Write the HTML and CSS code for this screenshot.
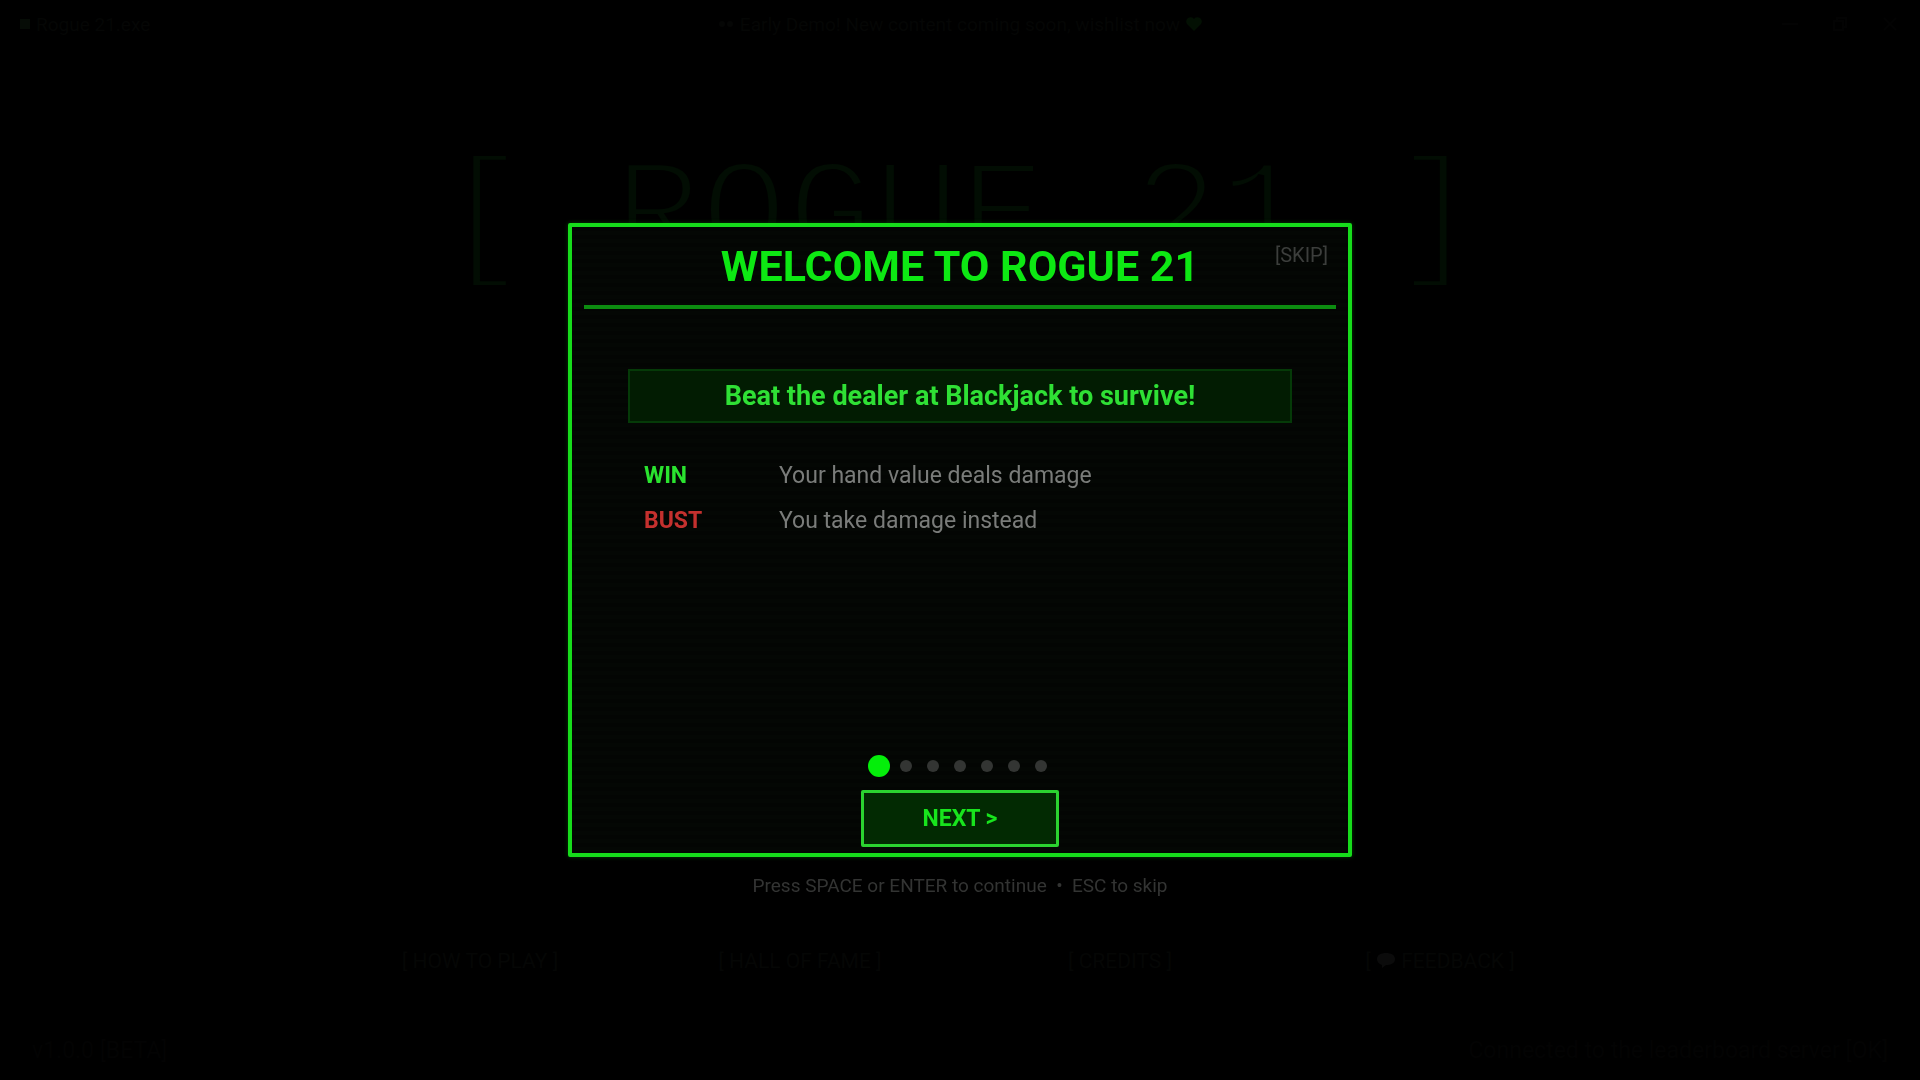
FILE: index.html
```html
<!DOCTYPE html>
<html lang="en">
<head>
<meta charset="utf-8">
<meta name="viewport" content="width=device-width, initial-scale=1">
<title>Rogue 21</title>
<link rel="stylesheet" href="styles.css">
</head>
<body>
<div class="screen">
  <header class="titlebar">
    <div class="app-name"><span class="app-icon"></span>Rogue 21.exe</div>
    <div class="notice">
      <svg width="16" height="12" viewBox="0 0 16 12" fill="currentColor"><circle cx="4" cy="6" r="3"/><circle cx="12" cy="6" r="3"/></svg>
      <span>Early Demo! New content coming soon, wishlist now</span>
      <svg class="heart" width="16" height="14" viewBox="0 0 16 14" fill="currentColor"><path d="M8 14 1 7a4 4 0 0 1 7-5 4 4 0 0 1 7 5Z"/></svg>
    </div>
    <div class="window-controls">
      <svg width="20" height="20" viewBox="0 0 20 20"><path d="M2 10h16"/></svg>
      <svg width="20" height="20" viewBox="0 0 20 20"><path d="M4 7h9v9H4zM7 7V4h9v9h-3"/></svg>
      <svg width="20" height="20" viewBox="0 0 20 20"><path d="m4 4 12 12M16 4 4 16"/></svg>
    </div>
  </header>
  <h1 class="logo">[ ROGUE 21 ]</h1>
  <nav class="menu">
    <a href="#play">[ HOW TO PLAY ]</a>
    <a href="#hall">[ HALL OF FAME ]</a>
    <a href="#credits">[ CREDITS ]</a>
    <a href="#feedback">[ <svg class="bubble" width="20" height="16" viewBox="0 0 20 16" fill="currentColor"><path d="M10 1c5 0 9 2 9 6s-4 6-9 6l-4 3v-3C3 12 1 10 1 7c0-4 4-6 9-6Z"/></svg> FEEDBACK ]</a>
  </nav>
  <footer class="footer">
    <span>v1.0.0 [BETA]</span>
    <span>Connected to the leaderboard server [OK]</span>
  </footer>
</div>

<div class="overlay">
  <section class="modal" role="dialog" aria-modal="true" aria-labelledby="modal-title">
    <header class="modal-header">
      <h2 class="modal-title" id="modal-title">WELCOME TO ROGUE 21</h2>
      <button class="skip" type="button">[SKIP]</button>
    </header>
    <div class="modal-body">
      <p class="callout">Beat the dealer at Blackjack to survive!</p>
      <dl class="rules">
        <dt class="win">WIN</dt>
        <dd>Your hand value deals damage</dd>
        <dt class="bust">BUST</dt>
        <dd>You take damage instead</dd>
      </dl>
    </div>
    <div class="dots">
      <span class="dot active"></span><span class="dot"></span><span class="dot"></span><span class="dot"></span><span class="dot"></span><span class="dot"></span><span class="dot"></span>
    </div>
    <button class="next" type="button">NEXT &gt;</button>
  </section>
  <p class="hint">Press SPACE or ENTER to continue &nbsp;•&nbsp; ESC to skip</p>
</div>
</body>
</html>
```
FILE: styles.css
```css
* {
  box-sizing: border-box;
}

body {
  margin: 0;
  background: #000;
  color: #050605;
  font-family: Roboto, "Liberation Sans", sans-serif;
}

h1, h2, p, dl, dd {
  margin: 0;
}

button {
  padding: 0;
  border: 0;
  background: none;
  font-family: inherit;
  cursor: pointer;
}

.screen {
  min-height: 100vh;
  display: flex;
  flex-direction: column;
}

.titlebar {
  display: grid;
  grid-template-columns: 1fr auto 1fr;
  align-items: center;
  height: 48px;
  padding: 0 20px;
  font-size: 19px;
}

.app-name, .notice, .window-controls {
  display: flex;
  align-items: center;
  gap: 6px;
}

.app-icon {
  width: 10px;
  height: 10px;
  background: #060c06;
}

.heart {
  color: #031003;
}

.window-controls {
  justify-content: flex-end;
  gap: 30px;
  color: #030303;
}

.window-controls svg {
  fill: none;
  stroke: currentColor;
  stroke-width: 2;
}

.logo {
  margin-top: 92px;
  color: #020d03;
  font: 400 144px/160px "Liberation Mono", monospace;
  text-align: center;
  white-space: nowrap;
  -webkit-text-stroke: 6px #000;
}

.menu {
  display: grid;
  grid-template-columns: repeat(4, 1fr);
  width: 1280px;
  max-width: 100%;
  margin: auto auto 64px;
  font-size: 21px;
  line-height: 24px;
  text-align: center;
}

.menu a {
  color: inherit;
  text-decoration: none;
}

.bubble {
  color: #0b0b0b;
}

.footer {
  display: flex;
  justify-content: space-between;
  padding: 0 32px 16px;
  color: #030303;
  font-size: 23px;
}

.overlay {
  position: fixed;
  inset: 0;
  display: grid;
  grid-template-rows: 1fr auto 1fr;
  justify-items: center;
}

.modal {
  grid-row: 2;
  display: flex;
  flex-direction: column;
  align-items: center;
  width: 784px;
  max-width: 100%;
  min-height: 634px;
  padding: 12px 12px 6px;
  border: 4px solid #16dc1b;
  border-radius: 2px;
  background: repeating-linear-gradient(#030503 0 4px, #040704 4px 8px);
  box-shadow: 0 0 4px #053c05;
}

.modal-header {
  display: grid;
  grid-template-columns: 1fr auto 1fr;
  align-items: start;
  align-self: stretch;
  padding: 0 8px 12px;
  border-bottom: 4px solid #0c8c10;
}

.modal-title {
  grid-column: 2;
  color: #0de813;
  font-size: 43px;
  font-weight: 700;
  line-height: 54px;
}

.skip {
  justify-self: end;
  padding-top: 4px;
  color: #3c3e3c;
  font-size: 20px;
  line-height: 24px;
}

.modal-body {
  flex: 1;
  align-self: stretch;
  padding: 60px 44px 0;
}

.callout {
  padding: 10px;
  border: 2px solid #053a08;
  background: #021c02;
  color: #2fe035;
  font-size: 27px;
  font-weight: 700;
  line-height: 30px;
  text-align: center;
}

.rules {
  display: grid;
  grid-template-columns: 120px 1fr;
  column-gap: 15px;
  row-gap: 15px;
  padding: 38px 16px 0;
  color: #7a7c7a;
  font-size: 23px;
  line-height: 30px;
}

.rules dt {
  font-weight: 700;
}

.win {
  color: #2ae32f;
}

.bust {
  color: #c4302e;
}

.dots {
  display: flex;
  align-items: center;
  gap: 15px;
  margin-bottom: 13px;
}

.dot {
  width: 12px;
  height: 12px;
  border-radius: 50%;
  background: #333533;
}

.dot.active {
  width: 22px;
  height: 22px;
  margin: 0 -5px;
  background: #04ee0a;
}

.next {
  width: 198px;
  height: 57px;
  border: 3px solid #2bd330;
  border-radius: 2px;
  background: #022a02;
  color: #18e41d;
  font-size: 23px;
  font-weight: 700;
}

.hint {
  grid-row: 3;
  margin-top: 17px;
  color: #333433;
  font-size: 19px;
  line-height: 24px;
}
```
